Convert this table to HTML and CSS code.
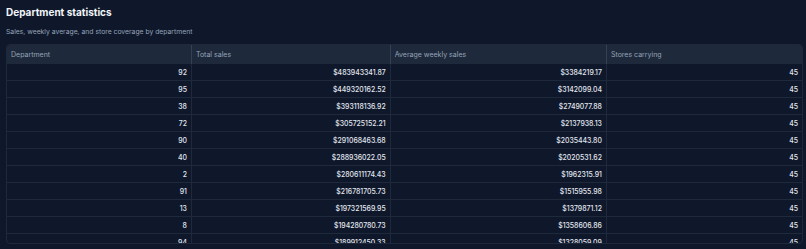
FILE: index.html
```html
<!DOCTYPE html>
<html>
<head>
<meta charset="utf-8">
<link rel="stylesheet" href="styles.css">
</head>
<body>
<div class="page">
  <h1 class="title">Department statistics</h1>
  <p class="subtitle">Sales, weekly average, and store coverage by department</p>
  <div class="table-wrap">
    <table class="stats">
      <colgroup>
        <col class="c1"><col class="c2"><col class="c3"><col class="c4">
      </colgroup>
      <thead>
        <tr><th>Department</th><th>Total sales</th><th>Average weekly sales</th><th>Stores carrying</th></tr>
      </thead>
      <tbody>
        <tr><td>92</td><td>$483943341.87</td><td>$3384219.17</td><td>45</td></tr>
        <tr><td>95</td><td>$449320162.52</td><td>$3142099.04</td><td>45</td></tr>
        <tr><td>38</td><td>$393118136.92</td><td>$2749077.88</td><td>45</td></tr>
        <tr><td>72</td><td>$305725152.21</td><td>$2137938.13</td><td>45</td></tr>
        <tr><td>90</td><td>$291068463.68</td><td>$2035443.80</td><td>45</td></tr>
        <tr><td>40</td><td>$288936022.05</td><td>$2020531.62</td><td>45</td></tr>
        <tr><td>2</td><td>$280611174.43</td><td>$1962315.91</td><td>45</td></tr>
        <tr><td>91</td><td>$216781705.73</td><td>$1515955.98</td><td>45</td></tr>
        <tr><td>13</td><td>$197321569.95</td><td>$1379871.12</td><td>45</td></tr>
        <tr><td>8</td><td>$194280780.73</td><td>$1358606.86</td><td>45</td></tr>
        <tr><td>94</td><td>$189912450.33</td><td>$1328059.09</td><td>45</td></tr>
        <tr><td>87</td><td>$185000000.00</td><td>$1300000.00</td><td>45</td></tr>
      </tbody>
    </table>
  </div>
</div>
</body>
</html>
```

FILE: styles.css
```css
html, body {
  margin: 0;
  padding: 0;
  background: #0f172a;
}
.page {
  padding: 6px 3px 0 6px;
  font-family: Inter, "Liberation Sans", sans-serif;
  color: #e2e8f0;
}
.title {
  margin: 0;
  font-size: 10px;
  line-height: 13px;
  font-weight: 700;
  color: #f1f5f9;
}
.subtitle {
  margin: 8px 0 0 0;
  font-size: 6.8px;
  line-height: 9px;
  color: #94a3b8;
}
.table-wrap {
  margin-top: 8px;
  height: 198px;
  overflow: hidden;
  border: 1px solid #1e293b;
  border-radius: 4px;
}
.stats {
  width: 100%;
  table-layout: fixed;
  border-collapse: collapse;
}
.c1 { width: 23.2%; }
.c2 { width: 25%; }
.c3 { width: 27.2%; }
.c4 { width: 24.6%; }
.stats th {
  background: #1e293b;
  color: #94a3b8;
  font-size: 7px;
  font-weight: 400;
  text-align: left;
  height: 18px;
  padding: 0 4px;
  border-left: 1px solid #334155;
}
.stats td {
  text-align: right;
  height: 16px;
  padding: 0 4px;
  border-top: 1px solid #1e293b;
  border-left: 1px solid #1e293b;
  color: #e2e8f0;
  font-size: 6.9px;
  font-weight: 500;
}
.stats th:first-child, .stats td:first-child {
  border-left: none;
}
```
